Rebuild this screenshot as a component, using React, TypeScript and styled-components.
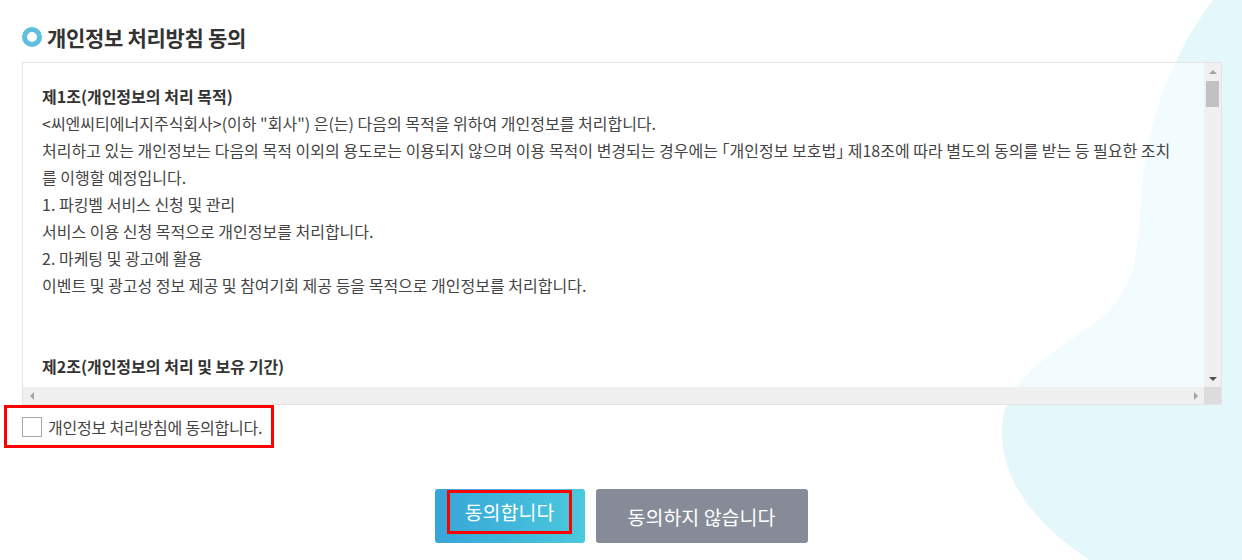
import React from "react";
import styled, { createGlobalStyle } from "styled-components";

const GlobalStyle = createGlobalStyle`
  html, body {
    margin: 0;
    padding: 0;
    background: #ffffff;
  }
  body {
    font-family: "Noto Sans CJK KR", "Noto Sans", sans-serif;
    color: #444;
    overflow: hidden;
  }
  * { box-sizing: border-box; }
`;

const Page = styled.div`
  position: relative;
  width: 1242px;
  height: 560px;
  overflow: hidden;
  padding: 22px 20px 0 22px;
`;

const Blob = styled.svg`
  position: absolute;
  left: 0;
  top: 0;
  width: 1242px;
  height: 560px;
  z-index: 0;
  pointer-events: none;
`;

const Content = styled.div`
  position: relative;
  z-index: 1;
  display: flex;
  flex-direction: column;
`;

const TitleRow = styled.h2`
  display: flex;
  align-items: center;
  gap: 5px;
  height: 30px;
  margin: 0 0 10px 0;
  font-size: 21px;
  font-weight: 700;
  letter-spacing: -0.3px;
  color: #333;
`;

const Ring = styled.span`
  width: 20px;
  height: 20px;
  border-radius: 50%;
  border: 5px solid #5cbfdb;
  background: #fff;
  flex: none;
`;

const Box = styled.div`
  display: grid;
  grid-template-columns: 1fr 17px;
  grid-template-rows: 1fr 17px;
  height: 343px;
  border: 1px solid #e4e4e4;
  background: rgba(255, 255, 255, 0.5);
`;

const Viewport = styled.div`
  overflow: hidden;
  padding: 20px 26px 0 19px;
  font-size: 16px;
  line-height: 27px;
  letter-spacing: 0;
  color: #444;
  font-feature-settings: "halt" 1;
`;

const Para = styled.p<{ $bold?: boolean; $gap?: number }>`
  margin: 0;
  font-weight: ${(p) => (p.$bold ? 700 : 400)};
  color: ${(p) => (p.$bold ? "#333" : "#444")};
  margin-top: ${(p) => (p.$gap ? `${p.$gap}px` : "0")};
`;

const VBar = styled.div`
  display: flex;
  flex-direction: column;
  background: #f0f0f0;
`;

const HBar = styled.div`
  display: flex;
  flex-direction: row;
  background: #f0f0f0;
`;

const Corner = styled.div`
  background: #dcdcdc;
`;

const ArrowBtn = styled.div`
  width: 17px;
  height: 17px;
  flex: none;
  display: flex;
  align-items: center;
  justify-content: center;
`;

const Arrow = styled.span<{ $dir: "up" | "down" | "left" | "right"; $color: string }>`
  width: 0;
  height: 0;
  border-style: solid;
  border-color: transparent;
  ${(p) =>
    p.$dir === "up"
      ? `border-width: 0 4px 4px 4px; border-bottom-color: ${p.$color};`
      : p.$dir === "down"
      ? `border-width: 4px 4px 0 4px; border-top-color: ${p.$color};`
      : p.$dir === "left"
      ? `border-width: 4px 4px 4px 0; border-right-color: ${p.$color};`
      : `border-width: 4px 0 4px 4px; border-left-color: ${p.$color};`}
`;

const Track = styled.div`
  flex: 1;
  display: flex;
  flex-direction: column;
`;

const Thumb = styled.div`
  margin: 1px 2px 0 2px;
  height: 26px;
  background: #c1c1c1;
`;

const AgreeRow = styled.label`
  display: flex;
  align-items: center;
  gap: 6px;
  width: 270px;
  height: 43px;
  margin-left: -18px;
  padding: 0 0 0 15px;
  border: 3px solid #ff0000;
  font-size: 16px;
  letter-spacing: -0.2px;
  color: #444;
  cursor: pointer;
`;

const CheckBox = styled.input.attrs({ type: "checkbox" })`
  appearance: none;
  width: 20px;
  height: 20px;
  margin: 0;
  border: 1px solid #a9a9a9;
  background: #fff;
  flex: none;
`;

const ButtonRow = styled.div`
  display: flex;
  justify-content: center;
  gap: 11px;
  margin-top: 41px;
  margin-left: -22px;
  margin-right: -20px;
`;

const Button = styled.button<{ $primary?: boolean; $w: number }>`
  width: ${(p) => p.$w}px;
  height: 54px;
  border: none;
  border-radius: 3px;
  display: flex;
  justify-content: center;
  padding: ${(p) => (p.$primary ? "1px 0 0 0" : "0")};
  align-items: ${(p) => (p.$primary ? "flex-start" : "center")};
  background: ${(p) =>
    p.$primary ? "linear-gradient(90deg, #37a5d8 0%, #4bc9dd 100%)" : "#868b97"};
  color: #fff;
  font-family: "Noto Sans CJK KR", "Noto Sans", sans-serif;
  font-size: 19.5px;
  cursor: pointer;
`;

const Marked = styled.span`
  display: flex;
  align-items: center;
  justify-content: center;
  width: 125px;
  height: 44px;
  border: 3px solid #ff0000;
  padding-bottom: 2px;
`;

export default function App() {
  return (
    <>
      <GlobalStyle />
      <Page>
        <Blob viewBox="0 0 1242 560" aria-hidden="true">
          <path
            d="M1213 0 C1175 50 1145 120 1141 200 C1138 270 1130 300 1085 330 C1040 360 1003 385 1002 430 C1001 490 1050 535 1090 560 L1242 560 L1242 0 Z"
            fill="#e4f7fb"
          />
        </Blob>
        <Content>
          <TitleRow>
            <Ring />
            개인정보 처리방침 동의
          </TitleRow>
          <Box>
            <Viewport>
              <Para $bold>제1조(개인정보의 처리 목적)</Para>
              <Para>
                &lt;씨엔씨티에너지주식회사&gt;(이하 "회사") 은(는) 다음의 목적을 위하여 개인정보를 처리합니다.
              </Para>
              <Para>
                처리하고 있는 개인정보는 다음의 목적 이외의 용도로는 이용되지 않으며 이용 목적이 변경되는 경우에는 「개인정보 보호법」 제18조에 따라 별도의 동의를 받는 등 필요한 조치를 이행할 예정입니다.
              </Para>
              <Para>1. 파킹벨 서비스 신청 및 관리</Para>
              <Para>서비스 이용 신청 목적으로 개인정보를 처리합니다.</Para>
              <Para>2. 마케팅 및 광고에 활용</Para>
              <Para>이벤트 및 광고성 정보 제공 및 참여기회 제공 등을 목적으로 개인정보를 처리합니다.</Para>
              <Para $bold $gap={54}>제2조(개인정보의 처리 및 보유 기간)</Para>
            </Viewport>
            <VBar>
              <ArrowBtn>
                <Arrow $dir="up" $color="#a3a3a3" />
              </ArrowBtn>
              <Track>
                <Thumb />
              </Track>
              <ArrowBtn>
                <Arrow $dir="down" $color="#505050" />
              </ArrowBtn>
            </VBar>
            <HBar>
              <ArrowBtn>
                <Arrow $dir="left" $color="#a3a3a3" />
              </ArrowBtn>
              <Track />
              <ArrowBtn>
                <Arrow $dir="right" $color="#a3a3a3" />
              </ArrowBtn>
            </HBar>
            <Corner />
          </Box>
          <AgreeRow>
            <CheckBox />
            개인정보 처리방침에 동의합니다.
          </AgreeRow>
          <ButtonRow>
            <Button $primary $w={150}>
              <Marked>동의합니다</Marked>
            </Button>
            <Button $w={212}>동의하지 않습니다</Button>
          </ButtonRow>
        </Content>
      </Page>
    </>
  );
}
